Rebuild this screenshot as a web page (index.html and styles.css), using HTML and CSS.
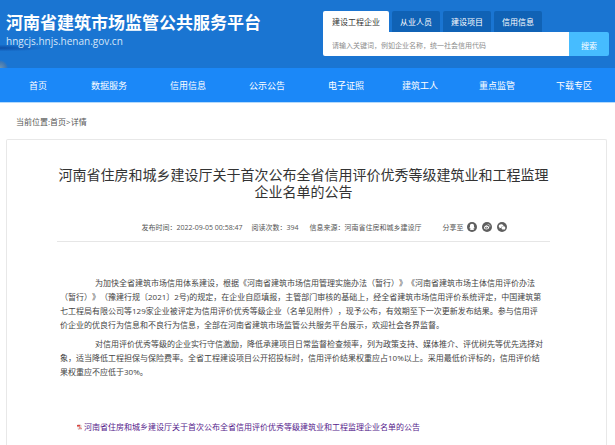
FILE: index.html
```html
<!DOCTYPE html>
<html lang="zh-CN">
<head>
    <meta charset="UTF-8">
    <title>河南省建筑市场监管公共服务平台</title>
    <link rel="stylesheet" href="styles.css">
</head>
<body>

<header class="header">
    <div class="brand">
        <div class="brand-name">河南省建筑市场监管公共服务平台</div>
        <div class="brand-domain">hngcjs.hnjs.henan.gov.cn</div>
    </div>
    <form class="search">
        <div class="search-tabs">
            <button type="button" class="tab active">建设工程企业</button>
            <button type="button" class="tab">从业人员</button>
            <button type="button" class="tab">建设项目</button>
            <button type="button" class="tab">信用信息</button>
        </div>
        <div class="search-bar">
            <input class="search-input" type="text" aria-label="搜索关键词" placeholder="请输入关键词，例如企业名称，统一社会信用代码">
            <button type="submit" class="search-btn">搜索</button>
        </div>
    </form>
</header>

<nav class="nav">
    <a href="#">首页</a>
    <a href="#">数据服务</a>
    <a href="#">信用信息</a>
    <a href="#">公示公告</a>
    <a href="#">电子证照</a>
    <a href="#">建筑工人</a>
    <a href="#">重点监管</a>
    <a href="#">下载专区</a>
</nav>

<div class="breadcrumb">当前位置:<a href="#">首页</a>&gt;<a href="#">详情</a></div>

<main class="article">
    <h1 class="article-title">河南省住房和城乡建设厅关于首次公布全省信用评价优秀等级建筑业和工程监理<br>企业名单的公告</h1>

    <div class="meta">
        <span class="meta-time">发布时间：2022-09-05 00:58:47</span>
        <span class="meta-count">阅读次数：394</span>
        <span class="meta-source">信息来源：河南省住房和城乡建设厅</span>
        <div class="share">
            <span>分享至</span>
            <a href="#" aria-label="QQ">
                <svg viewBox="0 0 20 20"><circle cx="10" cy="10" r="10" fill="#5f5f5f"/><path fill="#fff" d="M10 3.500c-2.600 0-4 1.900-4 4.300v1.500c-.8 1.100-1.400 2.500-1.200 3.500.3.400.8 0 1.300-.6.200.8.600 1.400 1.100 1.900-.7.300-1.100.8-.9 1.300.4.800 2.600.8 3.700.2 1.100.6 3.300.6 3.700-.2.200-.5-.2-1-.9-1.300.5-.5.900-1.100 1.100-1.900.5.600 1 1 1.300.6.200-1-.4-2.400-1.200-3.500V7.800c0-2.400-1.400-4.300-4-4.300z"/></svg>
            </a>
            <a href="#" aria-label="微博">
                <svg viewBox="0 0 20 20"><circle cx="10" cy="10" r="10" fill="#5f5f5f"/><path fill="#fff" d="M8.500 6.500c1-.4 1.800.2 1.500 1.500 1.800-.8 3.200-.3 2.700 1.200 1 .3 1.700 1 1.700 1.900 0 2-2.600 3.700-5.400 3.700-2.900 0-5-1.400-5-3.400 0-1.900 2.400-4.100 4.500-4.900z"/><ellipse cx="8.800" cy="11.500" rx="3.200" ry="2.200" fill="#5f5f5f"/><circle cx="8.500" cy="11.700" r="1.300" fill="#fff"/><path fill="none" stroke="#fff" stroke-width="1.200" stroke-linecap="round" d="M12 4.800c2.500-.4 4.300 1.400 3.900 4"/></svg>
            </a>
            <a href="#" aria-label="微信">
                <svg viewBox="0 0 20 20"><circle cx="10" cy="10" r="10" fill="#5f5f5f"/><path fill="#fff" d="M8.300 4.500C5.400 4.500 3.500 6.200 3.500 8.400c0 1.300.7 2.300 1.700 3l-.4 1.500 1.800-.9 1.700.2c0-2.700 2-4.400 4.800-4.400-.5-2-2.400-3.300-4.800-3.300z"/><path fill="#fff" d="M12.900 8.600c-2.200 0-3.900 1.400-3.900 3.200s1.700 3.200 3.900 3.200l1.300-.2 1.500.8-.4-1.300c.9-.6 1.400-1.500 1.400-2.500 0-1.800-1.700-3.200-3.800-3.200z"/></svg>
            </a>
        </div>
    </div>

    <div class="content">
        <p>为加快全省建筑市场信用体系建设，根据《河南省建筑市场信用管理实施办法（暂行）》《河南省建筑市场主体信用评价办法<br>（暂行）》（豫建行规〔2021〕2号)的规定，在企业自愿填报，主管部门审核的基础上，经全省建筑市场信用评价系统评定，中国建筑第<br>七工程局有限公司等129家企业被评定为信用评价优秀等级企业（名单见附件），现予公布，有效期至下一次更新发布结果。参与信用评<br>价企业的优良行为信息和不良行为信息，全部在河南省建筑市场监管公共服务平台展示，欢迎社会各界监督。</p>
        <p>对信用评价优秀等级的企业实行守信激励，降低承建项目日常监督检查频率，列为政策支持、媒体推介、评优树先等优先选择对<br>象，适当降低工程担保与保险费率。全省工程建设项目公开招投标时，信用评价结果权重应占10%以上。采用最低价评标的，信用评价结<br>果权重应不应低于30%。</p>
    </div>

    <div class="attachment">
        <svg class="pdf-icon" viewBox="0 0 12 14"><path fill="#fff" stroke="#b9b9b9" d="M2.500 1.500h6l3 3v8h-9z"/><path fill="#d8453f" d="M0 2h8v4H0z"/><path fill="none" stroke="#d8453f" stroke-width="1.300" d="M4 11.500c2-1 3-3 3-5 .5 2.500 2 4 4 4-2.500-.5-5 0-7 1z"/></svg>
        <a href="#">河南省住房和城乡建设厅关于首次公布全省信用评价优秀等级建筑业和工程监理企业名单的公告</a>
    </div>
</main>

</body>
</html>
```
FILE: styles.css
```css
* {
    box-sizing: border-box;
}

body {
    margin: 0;
    background: #fff;
    color: #444;
    font-family: "Open Sans", "Noto Sans CJK SC", sans-serif;
    font-size: 8px;
    text-spacing-trim: space-all;
}

a {
    color: inherit;
    text-decoration: none;
}

button, input {
    border: 0;
    padding: 0;
    font-family: inherit;
}

.header {
    display: flex;
    justify-content: space-between;
    height: 68px;
    padding: 11px 6px 0;
    background:
        radial-gradient(circle at 0 68px, #6f94b0 0, #3f78b4 6px, transparent 8px),
        radial-gradient(ellipse at 0 48px, #0d4fa8 0, rgba(13, 79, 168, 0) 45px),
        #1a75d2;
}

.brand {
    color: #fff;
    white-space: nowrap;
}

.brand-name {
    font-size: 17px;
    font-weight: bold;
    line-height: 24px;
}

.brand-domain {
    font-size: 10px;
    line-height: 12px;
    color: #d6e6f8;
}

.search {
    width: 286px;
}

.search-tabs {
    display: flex;
    gap: 3px;
}

.tab {
    height: 21px;
    padding: 0 8px;
    border-radius: 2px 2px 0 0;
    background: #1062b5;
    color: #fff;
    font-size: 8px;
}

.tab.active {
    padding: 0 9px;
    background: #fff;
    color: #333;
}

.search-bar {
    display: flex;
    height: 24px;
}

.search-input {
    flex: 1;
    min-width: 0;
    padding: 3px 9px 0;
    border-radius: 0 0 0 2px;
    font-size: 7px;
    color: #333;
}

.search-input::placeholder {
    color: #8c8c8c;
}

.search-btn {
    width: 40px;
    padding-top: 2px;
    border-radius: 0 2px 2px 0;
    background: #46bcff;
    color: #fff;
    font-size: 8px;
}

.nav {
    display: grid;
    grid-template-columns: 62fr 79fr 79fr 79fr 74fr 77fr 77fr 59fr;
    align-items: center;
    height: 35px;
    padding-left: 29px;
    border-bottom: 1px solid #b5dafb;
    background: #1b88f8;
    color: #fff;
    font-size: 9px;
}

.breadcrumb {
    padding: 13px 16px 0;
    line-height: 12px;
    color: #555;
}

.article {
    margin: 11px 8px 0 6px;
    padding: 26px 56px 12px 50px;
    border: 1px solid #e8e8e8;
    border-bottom: 0;
    border-radius: 2px 2px 0 0;
}

.article-title {
    margin: 0 -2px;
    font-size: 14px;
    font-weight: normal;
    line-height: 17px;
    text-align: center;
    white-space: nowrap;
    color: #333;
}

.meta {
    display: flex;
    align-items: center;
    justify-content: center;
    height: 42px;
    padding: 12px 0 0 41px;
    border-bottom: 1px solid #e6e6e6;
    font-size: 7px;
    color: #555;
    white-space: nowrap;
}

.meta-count {
    margin-left: 9px;
}

.meta-source {
    margin-left: 11px;
}

.share {
    display: flex;
    align-items: center;
    gap: 5px;
    margin-left: 21px;
}

.share span {
    margin-right: -2px;
}

.share svg {
    display: block;
    width: 10px;
    height: 10px;
}

.content {
    padding: 34px 3px 0;
    line-height: 14px;
    white-space: nowrap;
}

.content p {
    margin: 0 0 5px;
    text-indent: 35px;
}

.attachment {
    display: flex;
    align-items: center;
    gap: 2px;
    margin-top: 42px;
    padding-left: 20px;
    line-height: 12px;
    white-space: nowrap;
    color: #551a8b;
}

.pdf-icon {
    width: 5px;
    height: 6px;
}
```
